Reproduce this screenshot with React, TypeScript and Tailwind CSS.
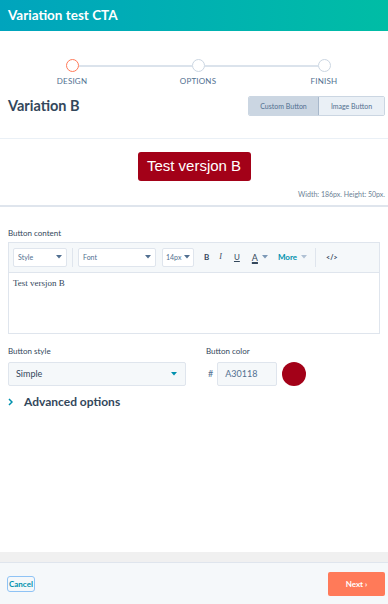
import React from "react";

const Caret = ({ className = "" }: { className?: string }) => (
  <svg width="6" height="4" viewBox="0 0 6 4" className={className}>
    <path d="M0 0 L6 0 L3 3.5 Z" fill="currentColor" />
  </svg>
);

const Step = ({ label, active, left, right }: { label: string; active?: boolean; left: boolean; right: boolean }) => (
  <div className="flex w-[126px] flex-col items-center">
    <div className="flex w-full items-center">
      <div className={`h-[2px] flex-1 ${left ? "bg-[#dbe3ec]" : "bg-transparent"}`} />
      <div
        className={`h-[13px] w-[13px] rounded-full border-[1.5px] bg-white ${active ? "border-[#ff7a59]" : "border-[#cbd6e2]"}`}
      />
      <div className={`h-[2px] flex-1 ${right ? "bg-[#dbe3ec]" : "bg-transparent"}`} />
    </div>
    <div className="mt-[4px] text-[8px] leading-[10px] tracking-[0.2px] text-[#516f90]">{label}</div>
  </div>
);

export default function App() {
  return (
    <div
      className="flex h-[604px] w-[388px] flex-col overflow-hidden bg-white text-[#33475b]"
      style={{ fontFamily: "Lato, 'Open Sans', sans-serif" }}
    >
      {/* Header */}
      <div className="flex h-[31px] shrink-0 items-center bg-gradient-to-r from-[#00a4bd] to-[#00bda5] px-[8px]">
        <span className="text-[13.5px] font-bold text-white">Variation test CTA</span>
      </div>

      {/* Content */}
      <div className="flex flex-1 flex-col">
        {/* Stepper */}
        <div className="flex pl-[9px] pt-[28px]">
          <Step label="DESIGN" active left={false} right />
          <Step label="OPTIONS" left right />
          <Step label="FINISH" left right={false} />
        </div>

        {/* Variation B row */}
        <div className="mt-[9px] flex items-center justify-between pl-[8px] pr-[3px]">
          <span className="text-[14.5px] font-bold text-[#33475b]">Variation B</span>
          <div className="flex h-[20px] overflow-hidden rounded-[2px] border border-[#cbd6e2] text-[7px] text-[#516f90]">
            <div className="flex w-[70px] items-center justify-center border-r border-[#a8b8cb] bg-[#cbd6e2]">
              Custom Button
            </div>
            <div className="flex w-[65px] items-center justify-center bg-[#eaf0f6]">Image Button</div>
          </div>
        </div>

        {/* divider */}
        <div className="mt-[21px] h-[1px] bg-[#eaf0f6]" />

        {/* Preview */}
        <div className="flex flex-col items-center pt-[13px]">
          <div
            className="flex h-[29px] w-[113px] items-center justify-center rounded-[3px] bg-[#a30118] text-[15px] text-white"
            style={{ fontFamily: "'Liberation Sans', Arial, sans-serif" }}
          >
            Test versjon B
          </div>
        </div>
        <div className="mt-[9px] pr-[3px] text-right text-[7px] leading-[9px] text-[#6b7f95]">
          Width: 186px. Height: 50px.
        </div>

        <div className="mt-[6px] h-[2px] bg-[#dfe5ed]" />

        {/* Button content */}
        <div className="px-[8px] pt-[21px]">
          <div className="text-[8px] leading-[10px] text-[#33475b]">Button content</div>
          <div className="mt-[4px] border border-[#dfe5ed]">
            <div className="flex h-[30px] items-center border-b border-[#dfe5ed] bg-[#f5f8fa] pl-[4px]">
              <div className="flex h-[19px] w-[54px] items-center justify-between rounded-[2px] border border-[#dfe5ed] bg-white px-[4px] text-[7px] text-[#516f90]">
                Style <Caret className="text-[#516f90]" />
              </div>
              <div className="mx-[5px] h-[19px] w-[1px] bg-[#dfe5ed]" />
              <div className="flex h-[19px] w-[78px] items-center justify-between rounded-[2px] border border-[#dfe5ed] bg-white px-[4px] text-[7px] text-[#516f90]">
                Font <Caret className="text-[#516f90]" />
              </div>
              <div className="ml-[6px] flex h-[19px] w-[32px] items-center justify-between rounded-[2px] border border-[#dfe5ed] bg-white px-[3px] text-[7px] text-[#516f90]">
                14px <Caret className="text-[#516f90]" />
              </div>
              <span className="ml-[10px] text-[8px] font-bold text-[#33475b]">B</span>
              <span className="ml-[10px] text-[8px] italic text-[#33475b]" style={{ fontFamily: "'Liberation Serif', serif" }}>
                I
              </span>
              <span className="ml-[12px] text-[8px] text-[#33475b] underline">U</span>
              <span className="ml-[12px] text-[9px] text-[#33475b] underline decoration-[1.5px]">A</span>
              <Caret className="ml-[4px] text-[#7c98b6]" />
              <span className="ml-[10px] text-[8px] font-bold text-[#0091ae]">More</span>
              <Caret className="ml-[4px] text-[#b0c1d4]" />
              <div className="ml-[8px] h-[19px] w-[1px] bg-[#dfe5ed]" />
              <span className="ml-[10px] text-[7px] font-bold text-[#33475b]">&lt;/&gt;</span>
            </div>
            <div
              className="h-[60px] bg-white px-[4px] pt-[4px] text-[9px] text-[#33475b]"
              style={{ fontFamily: "'Liberation Serif', 'DejaVu Serif', serif" }}
            >
              Test versjon B
            </div>
          </div>
        </div>

        {/* Style & color */}
        <div className="mt-[12px] flex px-[8px]">
          <div className="w-[178px]">
            <div className="text-[8px] leading-[10px] text-[#33475b]">Button style</div>
            <div className="mt-[6px] flex h-[24px] items-center justify-between rounded-[2px] border border-[#dfe5ed] bg-[#f5f8fa] pl-[7px] pr-[8px] text-[9px] text-[#33475b]">
              Simple
              <Caret className="text-[#0091ae]" />
            </div>
          </div>
          <div className="ml-[20px]">
            <div className="text-[8px] leading-[10px] text-[#33475b]">Button color</div>
            <div className="mt-[6px] flex items-center">
              <span className="ml-[2px] text-[9px] text-[#516f90]">#</span>
              <div className="ml-[4px] flex h-[24px] w-[60px] items-center rounded-[2px] border border-[#dfe5ed] bg-[#f5f8fa] px-[7px] text-[9px] text-[#516f90]">
                A30118
              </div>
              <div className="ml-[5px] h-[24px] w-[24px] rounded-full bg-[#a30118]" />
            </div>
          </div>
        </div>

        {/* Advanced options */}
        <div className="mt-[7px] flex items-center px-[8px]">
          <svg width="5" height="8" viewBox="0 0 5 8">
            <path d="M1 1 L4 4 L1 7" stroke="#0091ae" strokeWidth="1.5" fill="none" />
          </svg>
          <span className="ml-[11px] text-[12px] font-bold text-[#33475b]">Advanced options</span>
        </div>
      </div>

      {/* Grey band */}
      <div className="h-[10px] shrink-0 bg-[#f0f0f0]" />

      {/* Footer */}
      <div className="flex h-[42px] shrink-0 items-center justify-between border-t border-[#dfe5ed] bg-[#f5f8fa] pl-[8px] pr-[3px]">
        <span className="rounded-[2px] px-[1px] py-[2px] text-[8px] font-bold leading-[10px] text-[#0091ae] outline outline-[1.5px] outline-[#8fc3f5]">
          Cancel
        </span>
        <div className="flex h-[24px] w-[57px] items-center justify-center rounded-[2px] bg-[#ff7a59] text-[8px] font-bold text-white">
          Next ›
        </div>
      </div>
    </div>
  );
}
